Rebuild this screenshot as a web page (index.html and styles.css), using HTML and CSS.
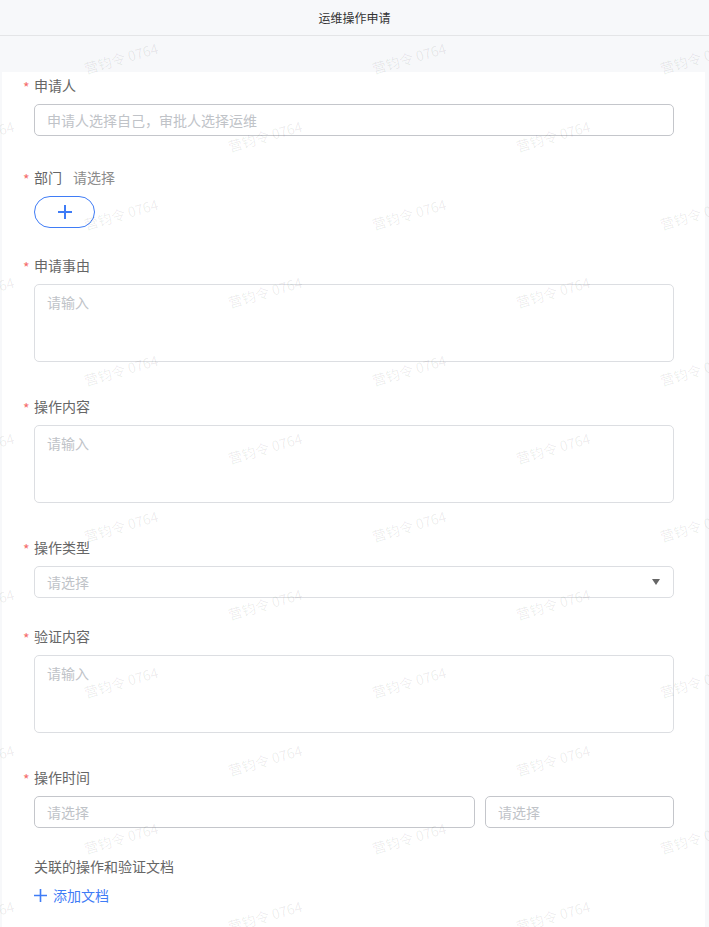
FILE: index.html
```html
<!DOCTYPE html>
<html lang="zh-CN">
  <head>
    <meta charset="UTF-8" />
    <title>运维操作申请</title>
    <link rel="stylesheet" href="styles.css">
  </head>
  <body>
    <div class="header">运维操作申请</div>
    <div class="sheet">
      <form class="card">
        <div class="field gap-input">
          <div class="label"><span class="req">*</span>申请人</div>
          <input class="control" type="text" placeholder="申请人选择自己，审批人选择运维" />
        </div>

        <div class="field gap-button">
          <div class="label"><span class="req">*</span>部门<span class="hint">请选择</span></div>
          <button class="pill" type="button">
            <svg width="16" height="16" viewBox="0 0 16 16"><path d="M8 1v14M1 8h14" stroke="#3f7cf6" stroke-width="2" fill="none"/></svg>
          </button>
        </div>

        <div class="field gap-area">
          <div class="label"><span class="req">*</span>申请事由</div>
          <textarea class="area" placeholder="请输入"></textarea>
        </div>

        <div class="field gap-area">
          <div class="label"><span class="req">*</span>操作内容</div>
          <textarea class="area" placeholder="请输入"></textarea>
        </div>

        <div class="field gap-short">
          <div class="label"><span class="req">*</span>操作类型</div>
          <div class="select">
            <span>请选择</span>
            <i class="caret"></i>
          </div>
        </div>

        <div class="field gap-area">
          <div class="label"><span class="req">*</span>验证内容</div>
          <textarea class="area" placeholder="请输入"></textarea>
        </div>

        <div class="field gap-short">
          <div class="label"><span class="req">*</span>操作时间</div>
          <div class="time-row">
            <input class="control" type="text" placeholder="请选择" />
            <input class="control" type="text" placeholder="请选择" />
          </div>
        </div>

        <div class="field">
          <div class="label">关联的操作和验证文档</div>
          <a class="add-doc" href="#">
            <svg width="13" height="13" viewBox="0 0 13 13"><path d="M6.5 0v13M0 6.5h13" stroke="#3f7cf6" stroke-width="1.6" fill="none"/></svg>
            添加文档
          </a>
        </div>
      </form>
    </div>

    <div class="watermarks" id="watermarks"></div>

    <script>
      // tile the "营钧令 0764" marks, every other row shifted half a step
      const layer = document.getElementById("watermarks");
      for (let row = 0; row < 13; row++) {
        const y = 58 + row * 78;
        const shift = row % 2 ? -23 : 121;
        for (let x = shift; x < 760; x += 288) {
          const mark = document.createElement("span");
          mark.className = "mark";
          mark.textContent = "营钧令 0764";
          mark.style.left = x + "px";
          mark.style.top = y + "px";
          layer.appendChild(mark);
        }
      }
    </script>
  </body>
</html>
```

FILE: styles.css
```css
* {
  box-sizing: border-box;
}

html,
body {
  margin: 0;
  padding: 0;
}

body {
  background-color: #f7f8fa;
  font-family: "Noto Sans CJK SC", "Noto Sans", sans-serif;
  color: #666;
  position: relative;
  overflow: hidden;
  height: 927px;
}

.header {
  height: 36px;
  line-height: 35px;
  text-align: center;
  font-size: 12px;
  color: #333;
  border-bottom: 1px solid #e4e5e7;
}

.sheet {
  padding: 36px 4px 0 2px;
}

.card {
  background-color: #fff;
  padding: 3px 31px 40px 32px;
  min-height: 900px;
}

.field {
  display: flex;
  flex-direction: column;
}

.gap-input {
  margin-bottom: 31px;
}

.gap-button {
  margin-bottom: 27px;
}

.gap-short {
  margin-bottom: 28px;
}

.gap-area {
  margin-bottom: 34px;
}

.label {
  font-size: 14px;
  line-height: 20px;
  height: 20px;
  margin-bottom: 9px;
  color: #666;
  display: flex;
  align-items: center;
}

.req {
  width: 11px;
  margin-left: -11px;
  color: #f56c6c;
  font-size: 14px;
  line-height: 14px;
  align-self: flex-start;
  padding-top: 5px;
}

.hint {
  margin-left: 11px;
  color: #8c8c8c;
}

.control,
.area,
.select {
  width: 100%;
  font-family: inherit;
  font-size: 14px;
  color: #333;
  background: #fff;
  border-radius: 5px;
  outline: none;
}

.control {
  height: 32px;
  padding: 0 12px;
  border: 1px solid #c4c6cb;
}

.area {
  height: 78px;
  padding: 7px 12px;
  border: 1px solid #dcdee2;
  resize: none;
  line-height: 20px;
  display: block;
}

.control::placeholder,
.area::placeholder {
  color: #c0c3c8;
}

.select {
  height: 32px;
  padding: 0 13px 0 12px;
  border: 1px solid #dcdee2;
  color: #c0c3c8;
  display: flex;
  align-items: center;
  justify-content: space-between;
}

.caret {
  width: 0;
  height: 0;
  border-left: 4px solid transparent;
  border-right: 4px solid transparent;
  border-top: 6px solid #666;
}

/* date takes 7 parts, clock 3 */
.time-row {
  display: grid;
  grid-template-columns: minmax(0, 7fr) minmax(0, 3fr);
  gap: 10px;
}

.pill {
  width: 61px;
  height: 32px;
  border: 1px solid #3f7cf6;
  border-radius: 16px;
  background: #fff;
  display: flex;
  align-items: center;
  justify-content: center;
  padding: 0;
}

.add-doc {
  display: flex;
  align-items: center;
  gap: 6px;
  height: 20px;
  font-size: 14px;
  color: #3f7cf6;
  text-decoration: none;
}

.watermarks {
  position: absolute;
  left: 0;
  top: 0;
  width: 100%;
  height: 100%;
  pointer-events: none;
  overflow: hidden;
}

.mark {
  position: absolute;
  transform: translate(-50%, -50%) rotate(-16deg);
  font-size: 14px;
  white-space: nowrap;
  color: rgba(0, 0, 0, 0.08);
}
```
